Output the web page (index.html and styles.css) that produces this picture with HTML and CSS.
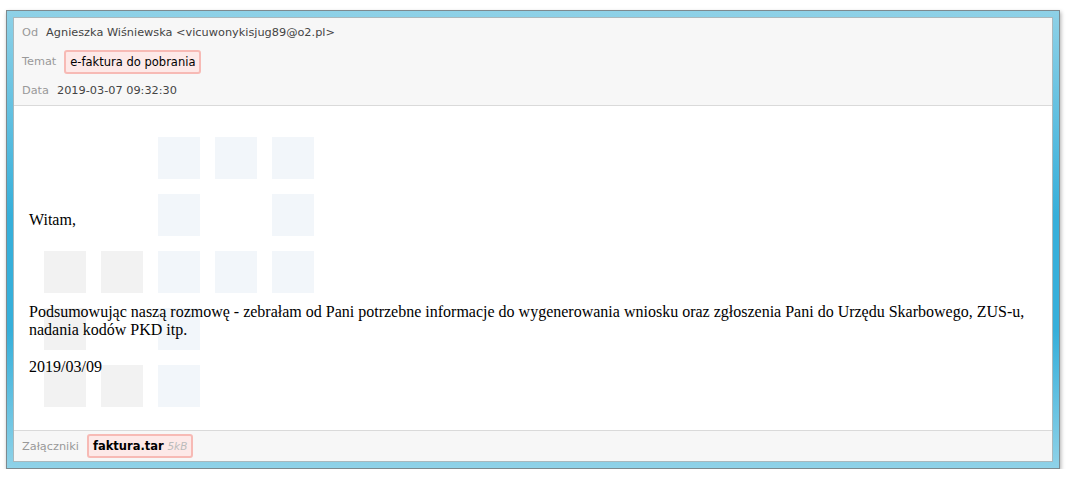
FILE: index.html
```html
<!DOCTYPE html>
<html lang="pl">
    <head>
        <meta charset="UTF-8">
        <meta name="viewport" content="width=device-width, initial-scale=1.0">
        <title>e-faktura do pobrania</title>
        <link rel="stylesheet" href="styles.css">
    </head>
    <body>
        <div id="Window">
            <div id="Mail">
                <div id="Head">
                    <div class="Row">
                        <span class="Label">Od</span>
                        <span class="Value">Agnieszka Wiśniewska &lt;vicuwonykisjug89@o2.pl&gt;</span>
                    </div>
                    <div class="Row">
                        <span class="Label">Temat</span>
                        <span class="Tag">e-faktura do pobrania</span>
                    </div>
                    <div class="Row">
                        <span class="Label">Data</span>
                        <span class="Value">2019-03-07 09:32:30</span>
                    </div>
                </div>
                <div id="Body">
                    <div id="Tiles">
                        <i></i><i></i><i class="Blue"></i><i class="Blue"></i><i class="Blue"></i>
                        <i></i><i></i><i class="Blue"></i><i></i><i class="Blue"></i>
                        <i class="Gray"></i><i class="Gray"></i><i class="Blue"></i><i class="Blue"></i><i class="Blue"></i>
                        <i class="Gray"></i><i></i><i class="Blue"></i><i></i><i></i>
                        <i class="Gray"></i><i class="Gray"></i><i class="Blue"></i><i></i><i></i>
                    </div>
                    <div id="Text">
                        <p class="Hello">Witam,</p>
                        <p class="Main">Podsumowując naszą rozmowę - zebrałam od Pani potrzebne informacje do wygenerowania wniosku oraz zgłoszenia Pani do Urzędu Skarbowego, ZUS-u, nadania kodów PKD itp.</p>
                        <p>2019/03/09</p>
                    </div>
                </div>
                <div id="Foot">
                    <span class="Label">Załączniki</span>
                    <span class="Tag"><b>faktura.tar</b> <em>5kB</em></span>
                </div>
            </div>
        </div>
    </body>
</html>
```
FILE: styles.css
```css
* {
    box-sizing: border-box;
    margin: 0px;
    padding: 0px;
}
body {
    background-color: #FFFFFF;
    font-family: "DejaVu Sans", Verdana, sans-serif;
    font-size: 11.3px;
    padding: 10px 12px 0px 6px;
}
#Window {
    background: linear-gradient(to bottom, #8ED1E7, #36AFDA 45%, #36AFDA 70%, #8FD2E8);
    border: 1px solid #7D8A8F;
    box-shadow: 1px 2px 4px #B0B0B0;
    height: 459px;
    padding: 6px;
    width: 1054px;
    #Mail {
        background-color: #FFFFFF;
        border: 1px solid #A9B8BD;
        display: flex;
        flex-direction: column;
        height: 100%;
    }
    .Label {
        color: #999999;
        margin-right: 8px;
    }
    .Value {
        color: #444444;
    }
    .Tag {
        background-color: #FDE9E8;
        border: 2px solid #F7BAB5;
        border-radius: 3px;
        color: #000000;
        font-size: 11.5px;
        line-height: 20px;
        padding: 0px 4px;
    }
    #Head {
        background-color: #F7F7F7;
        border-bottom: 1px solid #DADADA;
        padding: 0px 8px;
        .Row {
            align-items: center;
            display: flex;
            height: 29px;
        }
    }
    #Body {
        flex: 1;
        position: relative;
        #Tiles {
            display: grid;
            gap: 15px;
            grid-template-columns: repeat(5, 42px);
            grid-template-rows: repeat(5, 42px);
            left: 30px;
            position: absolute;
            top: 31px;
            i {
                display: block;
            }
            .Gray {
                background-color: #F2F2F2;
            }
            .Blue {
                background-color: #F2F6FA;
            }
        }
        #Text {
            color: #000000;
            font-family: "Liberation Serif", "Times New Roman", serif;
            font-size: 16px;
            line-height: 18px;
            padding: 105px 16px 0px 15px;
            position: relative;
            p {
                margin-bottom: 19px;
            }
            .Hello {
                margin-bottom: 74px;
            }
        }
    }
    #Foot {
        align-items: center;
        background-color: #F7F7F7;
        border-top: 1px solid #DADADA;
        display: flex;
        height: 31px;
        padding: 0px 8px;
        .Tag {
            b {
                font-size: 11.5px;
            }
            em {
                color: #BBBBBB;
                font-size: 10.5px;
            }
        }
    }
}
```
